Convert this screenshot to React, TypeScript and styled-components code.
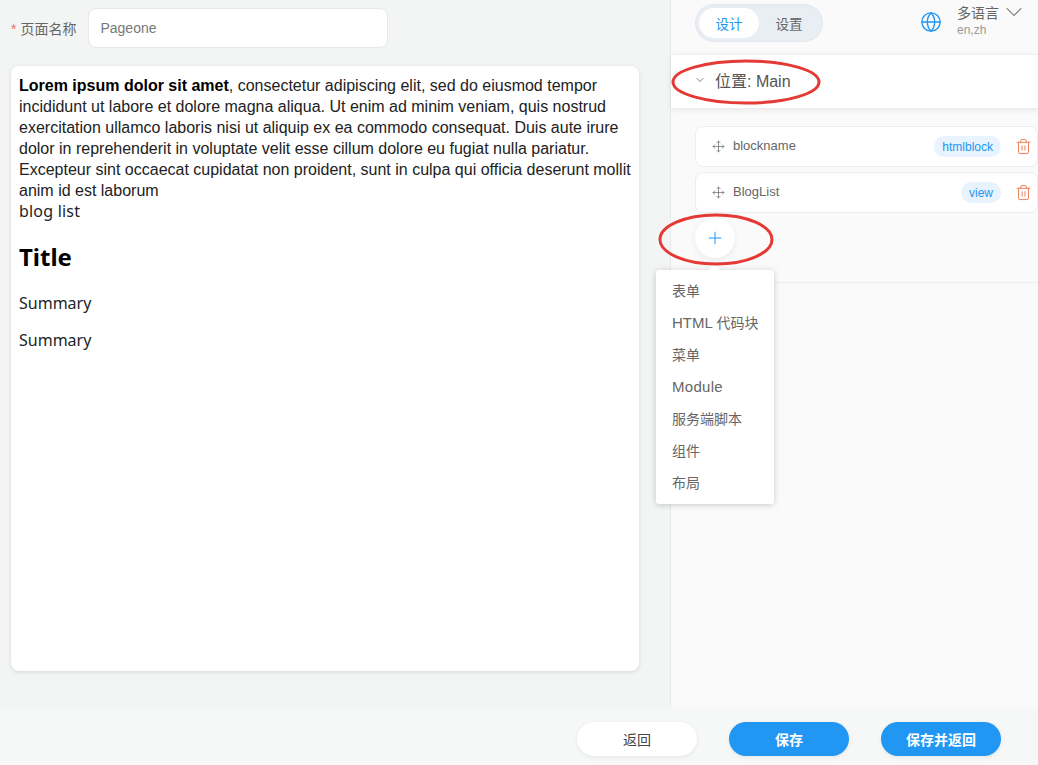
import styled, { createGlobalStyle } from "styled-components";
import { ChevronDown, Globe, Move, Plus, Trash2 } from "lucide-react";

const GlobalStyle = createGlobalStyle`
  html, body {
    margin: 0;
    padding: 0;
    height: 100%;
    overflow: hidden;
  }
  body {
    font-family: "Liberation Sans", "Noto Sans CJK SC", sans-serif;
    background: #f3f5f5;
  }
`;

const Page = styled.div`
  height: 765px;
  display: flex;
  flex-direction: column;
  position: relative;
`;

const Main = styled.div`
  flex: 1;
  display: flex;
  min-height: 0;
`;

const Editor = styled.div`
  width: 670px;
  flex: none;
  box-sizing: border-box;
  padding: 8px 31px 37px 11px;
  display: flex;
  flex-direction: column;
  gap: 18px;
`;

const NameRow = styled.div`
  display: flex;
  align-items: center;
  gap: 12px;
`;

const NameLabel = styled.label`
  font-size: 14px;
  color: #666;
  white-space: nowrap;
  padding-bottom: 1px;
  &::before {
    content: "*";
    color: #f0735f;
    margin-right: 4px;
  }
`;

const NameInput = styled.div`
  width: 300px;
  height: 40px;
  box-sizing: border-box;
  padding: 0 11px;
  display: flex;
  align-items: center;
  background: #fff;
  border: 1px solid #e6e8e8;
  border-radius: 8px;
  font-size: 14px;
  color: #777;
`;

const Canvas = styled.div`
  flex: 1;
  background: #fff;
  border-radius: 8px;
  box-shadow: 0 1px 4px rgba(0, 0, 0, 0.12);
  padding: 9px 8px;
  color: #222;
`;

const LoremText = styled.div`
  font-size: 16px;
  line-height: 21px;
  strong {
    color: #000;
  }
`;

const BlogBlock = styled.div`
  font-family: "Noto Sans", "Open Sans", sans-serif;
  font-size: 16px;
  line-height: 21px;
  color: #212529;
`;

const BlogListLabel = styled.div`
  letter-spacing: 0.2px;
`;

const BlogTitle = styled.h2`
  margin: 19px 0 20px;
  font-size: 24px;
  line-height: 32px;
  font-weight: 700;
  color: #000;
`;

const BlogSummary = styled.p`
  margin: 0 0 16px;
`;

const Side = styled.div`
  flex: 1;
  background: #fafafa;
  border-left: 1px solid #e8eaea;
  min-width: 0;
`;

const SideTop = styled.div`
  height: 54px;
  box-sizing: border-box;
  padding: 4px 10px 0 24px;
  display: flex;
  justify-content: space-between;
  align-items: flex-start;
`;

const Tabs = styled.div`
  display: flex;
  height: 38px;
  width: 128px;
  box-sizing: border-box;
  padding: 4px;
  background: #e9edf4;
  border-radius: 19px;
  box-shadow: inset 0 0 3px rgba(0, 0, 0, 0.06);
`;

const Tab = styled.div<{ $active?: boolean }>`
  flex: 1;
  display: flex;
  align-items: center;
  justify-content: center;
  border-radius: 15px;
  font-size: 13.5px;
  background: ${(p) => (p.$active ? "#fff" : "transparent")};
  color: ${(p) => (p.$active ? "#2196f3" : "#666")};
`;

const Lang = styled.div`
  display: flex;
  align-items: flex-start;
  gap: 15px;
  margin-top: -1px;
  color: #2196f3;
`;

const LangGlobe = styled.div`
  padding-top: 8px;
  display: flex;
`;

const LangText = styled.div`
  display: flex;
  flex-direction: column;
  gap: 2px;
`;

const LangTitle = styled.div`
  display: flex;
  align-items: center;
  gap: 1px;
  font-size: 14px;
  height: 18px;
  color: #666;
`;

const LangCodes = styled.div`
  font-size: 12px;
  line-height: 14px;
  color: #999;
`;

const SectionHead = styled.div`
  height: 54px;
  box-sizing: border-box;
  padding: 0 0 4px 23px;
  display: flex;
  align-items: center;
  gap: 9px;
  background: #fff;
  border-top: 1px solid #eceeee;
  box-shadow: 0 2px 6px rgba(0, 0, 0, 0.08);
  font-size: 16px;
  color: #555;
  position: relative;
`;

const SectionBody = styled.div`
  height: 175px;
  box-sizing: border-box;
  padding: 18px 0 0 24px;
  border-bottom: 1px solid #eceeee;
`;

const BlockRow = styled.div`
  height: 41px;
  box-sizing: border-box;
  margin-bottom: 5px;
  padding: 0 5px 0 16px;
  display: flex;
  align-items: center;
  background: #fff;
  border: 1px solid #eceeee;
  border-radius: 8px;
  color: #666;
`;

const BlockName = styled.span`
  flex: 1;
  margin-left: 8px;
  font-size: 13px;
  color: #666;
  padding-bottom: 2px;
`;

const Badge = styled.span`
  height: 21px;
  box-sizing: border-box;
  padding: 0 8px;
  display: flex;
  align-items: center;
  margin-right: 14px;
  background: #e8f3fd;
  border-radius: 11px;
  font-size: 12px;
  color: #2196f3;
`;

const AddButton = styled.div`
  width: 40px;
  height: 40px;
  margin-top: 3px;
  display: flex;
  align-items: center;
  justify-content: center;
  background: #fff;
  border-radius: 50%;
  box-shadow: 0 2px 6px rgba(0, 0, 0, 0.07);
  color: #2196f3;
`;

const Popover = styled.div`
  position: absolute;
  left: 656px;
  top: 270px;
  width: 118px;
  height: 234px;
  box-sizing: border-box;
  padding: 4px 0;
  background: #fff;
  border-radius: 3px;
  box-shadow: 0 1px 6px rgba(0, 0, 0, 0.2);
  &::before {
    content: "";
    position: absolute;
    left: 54px;
    top: -4px;
    width: 9px;
    height: 9px;
    background: #fff;
    transform: rotate(45deg);
  }
`;

const PopItem = styled.div`
  height: 32px;
  padding-left: 16px;
  display: flex;
  align-items: center;
  font-size: 14px;
  color: #666;
  white-space: pre;
  position: relative;
`;

const PopLatin = styled.span<{ $spacing?: number }>`
  font-size: 15px;
  letter-spacing: ${(p) => p.$spacing ?? 0}px;
`;

const Footer = styled.div`
  height: 57px;
  flex: none;
  box-sizing: border-box;
  padding: 14px 37px 9px 0;
  display: flex;
  justify-content: flex-end;
  gap: 32px;
  background: #f6f7f7;
`;

const Action = styled.div<{ $primary?: boolean }>`
  width: 120px;
  height: 34px;
  display: flex;
  align-items: center;
  justify-content: center;
  border-radius: 17px;
  font-size: 14px;
  font-weight: ${(p) => (p.$primary ? 700 : 400)};
  background: ${(p) => (p.$primary ? "#2196f3" : "#fff")};
  color: ${(p) => (p.$primary ? "#fff" : "#444")};
  box-shadow: 0 1px 4px rgba(0, 0, 0, 0.08);
`;

const Annotation = styled.svg<{ $x: number; $y: number; $w: number; $h: number }>`
  position: absolute;
  left: ${(p) => p.$x}px;
  top: ${(p) => p.$y}px;
  width: ${(p) => p.$w}px;
  height: ${(p) => p.$h}px;
  pointer-events: none;
`;

function Ring({ x, y, w, h }: { x: number; y: number; w: number; h: number }) {
  return (
    <Annotation $x={x} $y={y} $w={w} $h={h} viewBox={`0 0 ${w} ${h}`}>
      <ellipse cx={w / 2} cy={h / 2} rx={w / 2 - 2} ry={h / 2 - 2} fill="none" stroke="#e53935" strokeWidth="3" />
    </Annotation>
  );
}

function Block({ name, type }: { name: string; type: string }) {
  return (
    <BlockRow>
      <Move size={13} strokeWidth={1.3} />
      <BlockName>{name}</BlockName>
      <Badge>{type}</Badge>
      <Trash2 size={17} strokeWidth={1.4} color="#ee8059" />
    </BlockRow>
  );
}

export default function App() {
  return (
    <Page>
      <GlobalStyle />
      <Main>
        <Editor>
          <NameRow>
            <NameLabel>页面名称</NameLabel>
            <NameInput>Pageone</NameInput>
          </NameRow>
          <Canvas>
            <LoremText>
              <strong>Lorem ipsum dolor sit amet</strong>, consectetur adipiscing elit, sed do eiusmod tempor incididunt
              ut labore et dolore magna aliqua. Ut enim ad minim veniam, quis nostrud exercitation ullamco laboris nisi
              ut aliquip ex ea commodo consequat. Duis aute irure dolor in reprehenderit in voluptate velit esse cillum
              dolore eu fugiat nulla pariatur. Excepteur sint occaecat cupidatat non proident, sunt in culpa qui officia
              deserunt mollit anim id est laborum
            </LoremText>
            <BlogBlock>
              <BlogListLabel>blog list</BlogListLabel>
              <BlogTitle>Title</BlogTitle>
              <BlogSummary>Summary</BlogSummary>
              <BlogSummary>Summary</BlogSummary>
            </BlogBlock>
          </Canvas>
        </Editor>
        <Side>
          <SideTop>
            <Tabs>
              <Tab $active>设计</Tab>
              <Tab>设置</Tab>
            </Tabs>
            <Lang>
              <LangGlobe>
                <Globe size={22} strokeWidth={1.5} />
              </LangGlobe>
              <LangText>
                <LangTitle>
                  多语言
                  <ChevronDown size={28} strokeWidth={0.9} color="#666" />
                </LangTitle>
                <LangCodes>en,zh</LangCodes>
              </LangText>
            </Lang>
          </SideTop>
          <SectionHead>
            <ChevronDown size={12} strokeWidth={1.5} />
            位置: Main
          </SectionHead>
          <SectionBody>
            <Block name="blockname" type="htmlblock" />
            <Block name="BlogList" type="view" />
            <AddButton>
              <Plus size={20} strokeWidth={1.2} />
            </AddButton>
          </SectionBody>
        </Side>
      </Main>
      <Footer>
        <Action>返回</Action>
        <Action $primary>保存</Action>
        <Action $primary>保存并返回</Action>
      </Footer>
      <Popover>
        <PopItem>表单</PopItem>
        <PopItem>
          <PopLatin>HTML </PopLatin>代码块
        </PopItem>
        <PopItem>菜单</PopItem>
        <PopItem>
          <PopLatin $spacing={0.3}>Module</PopLatin>
        </PopItem>
        <PopItem>服务端脚本</PopItem>
        <PopItem>组件</PopItem>
        <PopItem>布局</PopItem>
      </Popover>
      <Ring x={671} y={59} w={150} h={46} />
      <Ring x={658} y={213} w={116} h={53} />
    </Page>
  );
}
